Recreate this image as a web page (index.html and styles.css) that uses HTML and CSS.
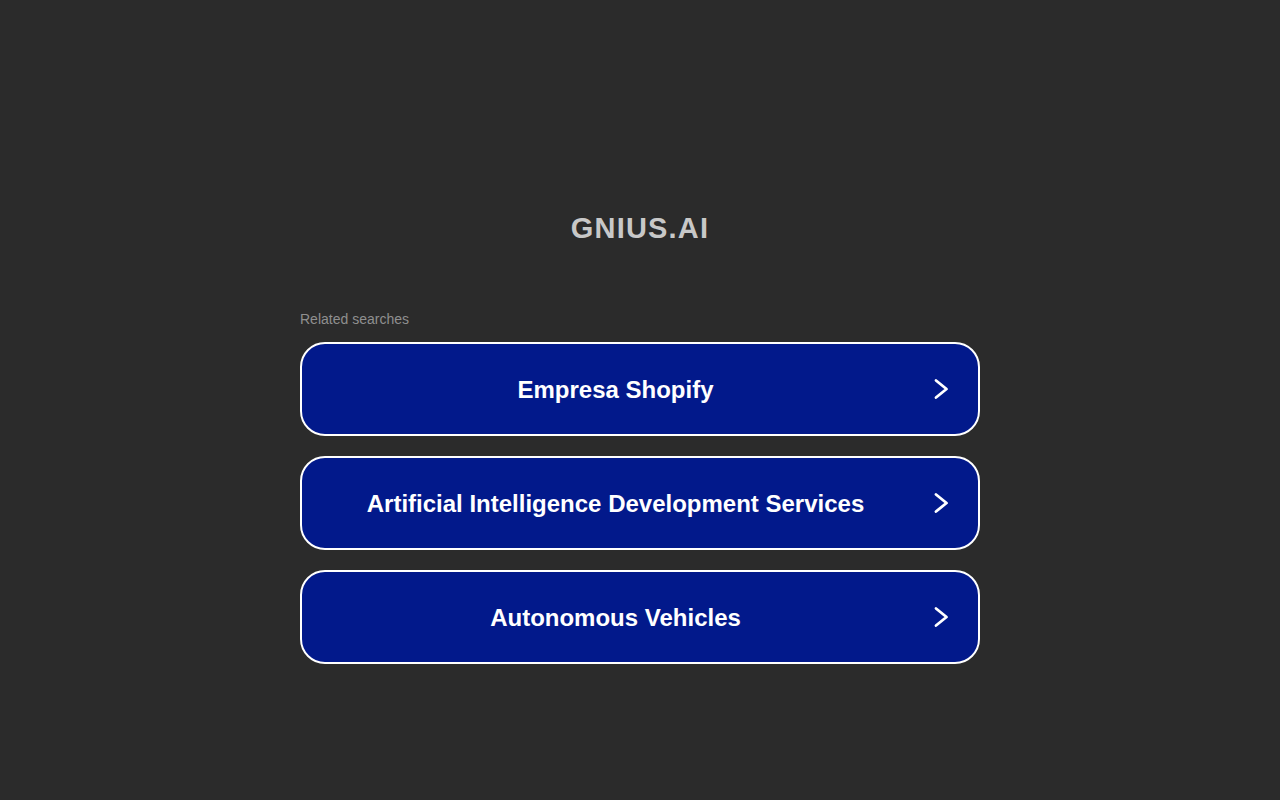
FILE: index.html
```html
<!DOCTYPE html>
<html lang="en">
<head>
<meta charset="utf-8">
<title>gnius.ai</title>
<link rel="stylesheet" href="styles.css">
</head>
<body>
<div class="page">
  <h1 class="title">GNIUS.AI</h1>
  <div class="related">
    <div class="related-label">Related searches</div>
    <a class="search-box" href="#">
      <span class="search-text">Empresa Shopify</span>
      <svg class="chev" width="20" height="24" viewBox="0 0 20 24"><polyline points="5,3.5 15.5,12 5,20.5" fill="none" stroke="#fff" stroke-width="2.8" stroke-linecap="round" stroke-linejoin="round"/></svg>
    </a>
    <a class="search-box" href="#">
      <span class="search-text">Artificial Intelligence Development Services</span>
      <svg class="chev" width="20" height="24" viewBox="0 0 20 24"><polyline points="5,3.5 15.5,12 5,20.5" fill="none" stroke="#fff" stroke-width="2.8" stroke-linecap="round" stroke-linejoin="round"/></svg>
    </a>
    <a class="search-box" href="#">
      <span class="search-text">Autonomous Vehicles</span>
      <svg class="chev" width="20" height="24" viewBox="0 0 20 24"><polyline points="5,3.5 15.5,12 5,20.5" fill="none" stroke="#fff" stroke-width="2.8" stroke-linecap="round" stroke-linejoin="round"/></svg>
    </a>
  </div>
</div>
</body>
</html>
```
FILE: styles.css
```css
html, body {
  margin: 0;
  padding: 0;
  background: #2b2b2b;
  font-family: Arial, "Liberation Sans", sans-serif;
  height: 100%;
}

.page {
  display: flex;
  flex-direction: column;
  align-items: center;
  padding-top: 208px;
}

.title {
  margin: 0;
  font-size: 29px;
  line-height: 40px;
  font-weight: bold;
  letter-spacing: 1.2px;
  color: #c8c8c8;
}

.related {
  width: 680px;
  margin-top: 62px;
  display: flex;
  flex-direction: column;
  gap: 20px;
}

.related-label {
  font-size: 14px;
  line-height: 18px;
  color: #8f8f8f;
  margin-bottom: -6px;
}

.search-box {
  display: flex;
  align-items: center;
  height: 90px;
  border: 2px solid #ffffff;
  border-radius: 25px;
  background: #02198b;
  text-decoration: none;
  color: #ffffff;
  padding-right: 27px;
}

.search-text {
  flex: 1;
  text-align: center;
  font-size: 24px;
  font-weight: bold;
  padding-top: 2px;
  margin-right: 2px;
}

.chev {
  display: block;
  flex: none;
}
```
